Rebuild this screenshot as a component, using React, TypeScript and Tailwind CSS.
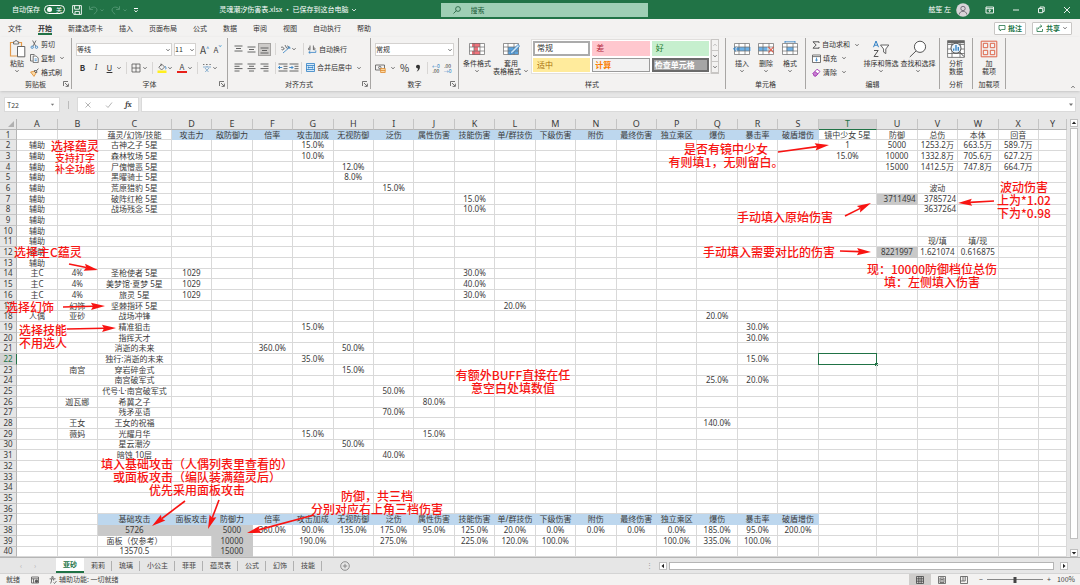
import React from 'react';
import clsx from 'clsx';

const COLS = 'ABCDEFGHIJKLMNOPQRSTUVWXY'.split('');
const ROWS = Array.from({ length: 40 }, (_, i) => i + 1);
const GRID = 'grid min-h-0 flex-1 grid-cols-[43fr_101fr_101fr_184fr_repeat(16,101fr)_146fr_repeat(4,101fr)_70fr]';

const STATS = {
    D: '攻击力', E: '敌防御力', F: '倍率', G: '攻击加成', H: '无视防御', I: '泛伤', J: '属性伤害', K: '技能伤害',
    L: '单/群技伤', M: '下级伤害', N: '附伤', O: '最终伤害', P: '独立乘区', Q: '爆伤', R: '暴击率', S: '破盾增伤',
};

const CELLS: Record<number, Record<string, string>> = {
    1: { ...STATS, C: '蕴灵/幻饰/技能', T: '镜中少女 5星', U: '防御', V: '总伤', W: '本体', X: '回音' },
    2: { A: '辅助', C: '古神之子 5星', G: '15.0%', T: '1', U: '5000', V: '1253.2万', W: '663.5万', X: '589.7万' },
    3: { A: '辅助', C: '森林牧场 5星', G: '10.0%', T: '15.0%', U: '10000', V: '1332.8万', W: '705.6万', X: '627.2万' },
    4: { A: '辅助', C: '尸傀憎恶 5星', H: '12.0%', U: '15000', V: '1412.5万', W: '747.8万', X: '664.7万' },
    5: { A: '辅助', C: '黑曜骑士 5星', H: '8.0%' },
    6: { A: '辅助', C: '荒原猎豹 5星', I: '15.0%', V: '波动' },
    7: { A: '辅助', C: '破阵红枪 5星', K: '15.0%', U: '3711494', V: '3785724' },
    8: { A: '辅助', C: '战场残念 5星', K: '10.0%', V: '3637264' },
    9: { A: '辅助' },
    10: { A: '辅助' },
    11: { A: '辅助', V: '现/填', W: '填/现' },
    12: { A: '辅助', U: '8221997', V: '1.621074', W: '0.616875' },
    13: { A: '辅助' },
    14: { A: '主C', B: '4%', C: '圣枪使者 5星', D: '1029', K: '30.0%' },
    15: { A: '主C', B: '4%', C: '美梦馆·夏梦 5星', D: '1029', K: '40.0%' },
    16: { A: '主C', B: '4%', C: '旅灵 5星', D: '1029', K: '30.0%' },
    17: { B: '幻饰', C: '坚棘指环 5星', L: '20.0%' },
    18: { A: '人偶', B: '亚砂', C: '战场冲锋', Q: '20.0%' },
    19: { C: '精准狙击', G: '15.0%', R: '30.0%' },
    20: { C: '指挥天才', R: '30.0%' },
    21: { C: '消逝的未来', F: '360.0%', H: '50.0%' },
    22: { C: '独行:消逝的未来', G: '35.0%', R: '15.0%' },
    23: { B: '南宫', C: '穿岩碎金式', H: '15.0%' },
    24: { C: '南宫破军式', Q: '25.0%', R: '20.0%' },
    25: { C: '代号·L·南宫破军式', I: '50.0%' },
    26: { B: '迦瓦娜', C: '希冀之子', J: '80.0%' },
    27: { C: '残矛巫语', I: '70.0%' },
    28: { B: '王女', C: '王女的祝福', Q: '140.0%' },
    29: { B: '薇妈', C: '光耀月华', G: '15.0%', J: '15.0%' },
    30: { C: '星云潮汐', H: '50.0%' },
    31: { C: '暗蚀 10层', I: '40.0%' },
    37: { ...STATS, C: '基础攻击', D: '面板攻击', E: '防御力' },
    38: {
        C: '5726', E: '5000', F: '360.0%', G: '90.0%', H: '135.0%', I: '175.0%', J: '95.0%', K: '125.0%', L: '20.0%',
        M: '0.0%', N: '0.0%', O: '0.0%', P: '0.0%', Q: '185.0%', R: '95.0%', S: '200.0%',
    },
    39: {
        C: '面板（仅参考）', E: '10000', G: '190.0%', I: '275.0%', K: '225.0%', L: '120.0%', M: '100.0%',
        P: '100.0%', Q: '335.0%', R: '100.0%',
    },
    40: { C: '13570.5', E: '15000' },
};

const GRAY_CELLS = ['U7', 'U12', 'C38', 'D38', 'E38', 'E39', 'E40'];
const RIGHT_CELLS = ['U7', 'V7', 'V8'];

const isBlue = (col: string, row: number) =>
    (row === 1 && col >= 'D' && col <= 'S') || (row === 37 && col >= 'C' && col <= 'S');

const Chevron = ({ className }: { className?: string }) => (
    <svg viewBox="0 0 6 4" className={clsx('h-1 w-1.5 shrink-0', className)} fill="none" stroke="#444" strokeWidth="0.8">
        <path d="M1.4 1.2 3 2.8l1.6-1.6" />
    </svg>
);

const Launcher = () => (
    <button aria-label="更多" className="absolute right-0.5 bottom-0.5">
        <svg viewBox="0 0 6 6" className="size-1.5" fill="none" stroke="#555" strokeWidth="0.8">
            <path d="M.5 5V.5H5M2 2l3 3M5.4 2.6v2.8H2.6" />
        </svg>
    </button>
);

const Divider = () => <span className="mx-1 h-3 w-px bg-[#d8d6d4]" />;

const Group: React.FC<{ label: string; width: string; launcher?: boolean; children: React.ReactNode }> = ({
    label, width, launcher, children,
}) => (
    <section className={clsx('relative flex shrink-0 flex-col border-r border-[#a8a6a4]', width)}>
        <div className="flex flex-1 items-stretch">{children}</div>
        <h2 className="flex h-[10px] items-center justify-center">{label}</h2>
        {launcher && <Launcher />}
    </section>
);

const Big: React.FC<{ icon: React.ReactNode; lines: string[]; width: string; drop?: boolean }> = ({
    icon, lines, width, drop,
}) => (
    <button className={clsx('flex shrink-0 flex-col items-center leading-[8px]', width)}>
        <span className="mb-px flex h-[19px] items-center">{icon}</span>
        {lines.map((l, i) => (
            <span key={l} className="flex items-center whitespace-nowrap">
                {l}
                {drop && i === 1 && <Chevron className="ml-0.5" />}
            </span>
        ))}
        {drop && lines.length === 1 && <Chevron className="mt-0.5" />}
    </button>
);

const Small: React.FC<{ icon: React.ReactNode; text: string; drop?: boolean; className?: string }> = ({
    icon, text, drop, className,
}) => (
    <button className={clsx('flex items-center gap-0.5 whitespace-nowrap', className)}>
        {icon}
        {text}
        {drop && <Chevron className="ml-0.5" />}
    </button>
);

/* ---- ribbon icons ---- */

const PasteIcon = () => (
    <svg viewBox="0 0 17 19" className="h-[19px] w-[17px]" fill="none">
        <path d="M10 17H1.5V3.5h11V7" stroke="#e39a4a" strokeWidth="1.2" />
        <path d="M4.5 5V2.8h1.3a1.3 1.3 0 0 1 2.6 0h1.3V5z" fill="#f3f2f1" stroke="#555" strokeWidth="0.8" />
        <path d="M8.5 7.5h7.3v10.3H8.5z" fill="#fff" stroke="#555" strokeWidth="0.9" />
    </svg>
);

const CutIcon = () => (
    <svg viewBox="0 0 9 9" className="size-[9px]" fill="none">
        <path d="M2.6.5 5.8 6.3M6 .5 2.9 6.3" stroke="#555" strokeWidth="0.8" />
        <circle cx="2.2" cy="7.2" r="1.2" stroke="#2f7fc4" strokeWidth="0.8" />
        <circle cx="6.5" cy="7.2" r="1.2" stroke="#2f7fc4" strokeWidth="0.8" />
    </svg>
);

const CopyIcon = () => (
    <svg viewBox="0 0 9 9" className="size-[9px]" fill="none" strokeWidth="0.8">
        <path d="M2.8 7H.5V.5h4" stroke="#555" />
        <path d="M3.2 2h3l2 2v4.6h-5z" fill="#fff" stroke="#555" />
        <path d="M4.6 5h2.2M4.6 6.7h2.2" stroke="#2f7fc4" />
    </svg>
);

const BrushIcon = () => (
    <svg viewBox="0 0 9 9" className="size-[9px]" fill="none">
        <path d="M.6 4 4.4 3.2 6 5 4 8.4z" fill="#fbd9a5" stroke="#e08a2c" strokeWidth="0.8" />
        <path d="m4.2 3 1-1 2 2-1 1zM6.2 3 8.4.6" stroke="#555" strokeWidth="0.9" />
    </svg>
);

const Lines = ({ d, on }: { d: string; on?: boolean }) => (
    <button className={clsx('flex size-[13px] items-center justify-center', on && 'border border-[#a5a3a1] bg-[#cdcbc9]')}>
        <svg viewBox="0 0 9 9" className="size-[9px] shrink-0" fill="none" stroke="#555" strokeWidth="0.9">
            <path d={d} />
        </svg>
    </button>
);

const IndentIcon = ({ flip }: { flip?: boolean }) => (
    <svg viewBox="0 0 10 9" className="h-[9px] w-[10px]" fill="none" strokeWidth="0.9">
        <path d="M.5 1h9M5.5 3.3h4M5.5 5.7h4M.5 8h9" stroke="#555" />
        <path d={flip ? 'M.3 4.5h3.6M2.5 3l1.5 1.5L2.5 6' : 'M4.2 4.5H.6M2 3 .5 4.5 2 6'} stroke="#2f7fc4" />
    </svg>
);

const GridIcon = ({ kind }: { kind: 'cond' | 'table' | 'insert' | 'delete' | 'format' }) => (
    <svg viewBox="0 0 18 16" className="h-4 w-[18px]" fill="none">
        <path d="M1.5 2.5h15v11h-15z" fill="#fff" />
        {kind === 'cond' && <path d="M4 2h8v4H4zM4 10h8v4H4zM6 6h4v4H6z" fill="#f2727c" />}
        {kind === 'table' && <path d="M6 6h10.5v7.5H6z" fill="#5ba3dd" />}
        {kind === 'insert' && <path d="M4 6h13.5v4H4z" fill="#6db1e6" />}
        {kind === 'delete' && <path d="M1.5 6h9v4h-9z" fill="#6db1e6" />}
        {kind === 'format' && <path d="M5.5 6h7v4h-7z" fill="#6db1e6" />}
        <path d="M1.5 2.5h15v11h-15zM1.5 6h15M1.5 10h15M6 2.5v11M12 2.5v11" stroke="#6a6a6a" strokeWidth="0.7" />
        {kind === 'table' && <path d="m8 13.5 1-3 7-7 1.6 1.6-7 7z" fill="#cfe5f6" stroke="#2f7fc4" strokeWidth="0.8" />}
        {kind === 'insert' && <path d="M6 8H.8M3 5.6.6 8 3 10.4" stroke="#2f7fc4" strokeWidth="1" />}
        {kind === 'delete' && <path d="m11.5 6 5 5.5m0-5.5-5 5.5" stroke="#e0523f" strokeWidth="1.1" />}
        {kind === 'format' && <path d="M4 .8h10M4 0v2M14 0v2" stroke="#2f7fc4" strokeWidth="0.8" />}
    </svg>
);

const SortIcon = () => (
    <svg viewBox="0 0 18 18" className="size-[18px]" fill="none">
        <path d="M1.5 7.2 4 1l2.5 6.2M2.3 5.2h3.4" stroke="#2f7fc4" strokeWidth="1" />
        <path d="M2 10.5h4.2L2 16.5h4.4" stroke="#555" strokeWidth="1" />
        <path d="M8.5 5h8.3l-3 4v4.6l-2.2-1.5V9z" fill="#fff" stroke="#555" strokeWidth="0.9" />
    </svg>
);

const FindIcon = () => (
    <svg viewBox="0 0 18 18" className="size-[18px]" fill="none" stroke="#555" strokeWidth="1">
        <circle cx="11" cy="6.8" r="5.6" fill="#fff" />
        <path d="m7 11-6.2 6" />
    </svg>
);

const AnalyzeIcon = () => (
    <svg viewBox="0 0 18 18" className="size-[18px]" fill="none">
        <path d="M.6.6h16.8v16.8H.6zM.6 4.5h16.8M.6 9h16.8M.6 13.5h16.8M5 .6v16.8M13 .6v16.8" fill="#fff" stroke="#666" strokeWidth="0.8" />
        <path d="M.6.6h16.8v2.6H.6z" fill="#666" />
        <circle cx="9" cy="8.2" r="5" fill="#e9f3fb" stroke="#444" strokeWidth="0.9" />
        <path d="M6.7 10.8V8.4M9 10.8V5M11.3 10.8V7" stroke="#2f7fc4" strokeWidth="1.3" />
        <path d="m12.6 12 4.4 4.6" stroke="#444" strokeWidth="1" />
    </svg>
);

const AddinIcon = () => (
    <svg viewBox="0 0 18 18" className="size-[18px]" fill="none" stroke="#dd6348" strokeWidth="1">
        <path d="M1.2 1.2h15.6v15.6H1.2z" />
        <path d="M3.3 3.3h4.4v4.4H3.3zM10.3 3.3h4.4v4.4h-4.4zM3.3 10.3h4.4v4.4H3.3zM10.3 10.3h4.4v4.4h-4.4z" />
    </svg>
);

const TitleBar = () => (
    <header className="flex h-[19px] shrink-0 items-center bg-[#217346] text-white">
        <div className="flex flex-1 items-center pl-3">
            <label className="flex items-center gap-1">
                自动保存
                <input type="checkbox" className="peer sr-only" />
                <span className="flex h-[9px] w-[21px] items-center justify-between rounded-full border border-white px-0.5 text-[6px]">
                    <span className="size-[5px] rounded-full bg-white" />关
                </span>
            </label>
            <svg viewBox="0 0 10 10" className="ml-[7px] size-[10px]" fill="none" stroke="#fff" strokeWidth="0.9">
                <path d="M.6.6h8.8v8.8H2L.6 8zM2.6.8v3.4h4.8V.8M3 9.2V6.4h4.4v2.8" />
            </svg>
            <svg viewBox="0 0 52 10" className="ml-1.5 h-[10px] w-[52px]" fill="none" stroke="#4f9570" strokeWidth="1">
                <path d="M1.5 1.2v3.3h3.4M1.8 4.2C4 1 9 1.6 9 5c0 1.8-1.6 3-3.2 4.2M31.5 1.2v3.3h-3.4M31.2 4.2C29 1 24 1.6 24 5c0 1.8 1.6 3 3.2 4.2" />
                <path d="m12.5 4.5 1.5 1.4 1.5-1.4M35.5 4.5 37 5.9l1.5-1.4" />
                <path d="M46 3.5h4M46.4 5.3 48 6.9l1.6-1.6" stroke="#fff" />
            </svg>
            <h1 className="mr-20 ml-auto flex items-center whitespace-nowrap">
                灵魂潮汐伤害表.xlsx • 已保存到这台电脑
                <svg viewBox="0 0 6 4" className="ml-0.5 h-1 w-1.5" fill="none" stroke="#fff" strokeWidth="0.8"><path d="m1 1 2 2 2-2" /></svg>
            </h1>
        </div>
        <label className="ml-1 flex h-[14px] w-[207px] items-center gap-2.5 bg-[#9fcfb5] pl-3 text-[#1c5b38]">
            <svg viewBox="0 0 8 8" className="size-2" fill="none" stroke="#1c5b38" strokeWidth="0.8">
                <circle cx="5" cy="3" r="2.4" /><path d="M3.3 4.7.5 7.5" />
            </svg>
            <input placeholder="搜索" aria-label="搜索" className="w-24 bg-transparent outline-none placeholder:text-[#1c5b38]" />
        </label>
        <div className="flex flex-1 items-center justify-end pr-2">
            <span>舷笙 左</span>
            <svg viewBox="0 0 14 14" className="ml-[5px] size-[14px]" fill="none">
                <circle cx="7" cy="7" r="6.8" fill="#d9d4d8" />
                <circle cx="7" cy="5.5" r="2.2" stroke="#6b6570" strokeWidth="0.9" />
                <path d="M3.2 11.5c.4-4.3 7.2-4.3 7.6 0" stroke="#6b6570" strokeWidth="0.9" />
            </svg>
            <svg viewBox="0 0 88 10" className="ml-[14px] h-[10px] w-[88px]" fill="none" stroke="#fff" strokeWidth="0.9">
                <path d="M2 2h7.5v6H2zM2 3.7h7.5M5.7 7V5M4.7 5.7l1-1 1 1" />
                <path d="M29 5h6" />
                <path d="M54.5 3.5h4.2v4.2h-4.2zM56 3.3V2h4.2v4.4H59" />
                <path d="m80 2 6 6m0-6-6 6" />
            </svg>
        </div>
    </header>
);

const MENU = ['文件', '开始', '新建选项卡', '插入', '页面布局', '公式', '数据', '审阅', '视图', '自动执行', '帮助'];

const MenuBar = () => (
    <nav className="flex h-[18px] shrink-0 items-center gap-4 bg-[#f3f2f1] px-2">
        {MENU.map((m) => (
            <button key={m} className={clsx('flex h-[14px] items-center border-y-2 border-transparent whitespace-nowrap', m === '开始' && 'border-b-[#217346] font-bold')}>
                {m}
            </button>
        ))}
        <div className="ml-auto flex gap-1.5 font-bold text-[#217346]">
            <button className="flex h-[13px] w-8 items-center justify-center gap-0.5 rounded-[1px] border border-[#c8c6c4] bg-white">
                <svg viewBox="0 0 8 8" className="size-2" fill="none" stroke="#217346" strokeWidth="0.8"><path d="M1 1.5h6v4H3.5L2.2 7V5.5H1z" /></svg>
                批注
            </button>
            <button className="flex h-[13px] w-10 items-center justify-center gap-0.5 rounded-[1px] border border-[#c8c6c4] bg-white">
                <svg viewBox="0 0 8 8" className="size-2" fill="none" stroke="#217346" strokeWidth="0.8"><path d="M1 3.5v4h5.5V5M2.5 5C2.6 3 4 2.2 5.5 2.2M4.3.8l1.6 1.4-1.6 1.4" /></svg>
                共享
                <Chevron />
            </button>
        </div>
    </nav>
);

const Ribbon = () => (
    <div className="flex h-[54px] shrink-0 bg-[#f3f2f1] pt-px pb-0.5 shadow-sm">
        <Group label="剪贴板" width="w-[72px]" launcher>
            <div className="flex pt-px pl-2">
                <Big icon={<PasteIcon />} lines={['粘贴']} width="w-[18px]" drop />
            </div>
            <div className="flex flex-col justify-around pl-1">
                <Small icon={<CutIcon />} text="剪切" />
                <Small icon={<CopyIcon />} text="复制" drop />
                <Small icon={<BrushIcon />} text="格式刷" />
            </div>
        </Group>

        <Group label="字体" width="w-[156px]" launcher>
            <div className="flex flex-1 flex-col justify-around py-0.5 pl-1">
                <div className="flex items-center gap-0.5">
                    <label className="flex items-center border border-[#d4d2d0] bg-white">
                        <select aria-label="字体" className="h-[11px] w-[88px] appearance-none bg-white"><option>等线</option></select>
                        <Chevron />
                    </label>
                    <label className="flex items-center border border-[#d4d2d0] bg-white">
                        <select aria-label="字号" className="h-[11px] w-[14px] appearance-none bg-white"><option>11</option></select>
                        <Chevron />
                    </label>
                    <button className="ml-0.5 text-[10px] text-[#444]">A<sup className="text-[6px] text-[#2f7fc4]">^</sup></button>
                    <button className="ml-0.5 text-[8px] text-[#444]">A<sup className="text-[6px] text-[#2f7fc4]">ˇ</sup></button>
                </div>
                <div className="flex items-center text-[#333]">
                    <button className="w-[13px] text-[8px] font-bold">B</button>
                    <button className="w-[14px] font-serif text-[8px] italic">I</button>
                    <button className="w-[13px] text-[8px] underline">U</button>
                    <Chevron />
                    <Divider />
                    <svg viewBox="0 0 10 10" className="size-[10px]" fill="none" stroke="#555" strokeWidth="0.8"><path d="M1 1h8v8H1zM5 1v8M1 5h8" /></svg>
                    <Chevron className="ml-px" />
                    <Divider />
                    <svg viewBox="0 0 10 10" className="size-[10px]" fill="none">
                        <path d="m1.8 4.2 3-3 2.8 2.8-3 3zM4 .6v2.6" stroke="#555" strokeWidth="0.8" />
                        <path d="M8.2 3.2c1 1.6 1 2.8.2 3" stroke="#2f7fc4" strokeWidth="0.9" />
                        <path d="M.5 7.5h9V10h-9z" fill="#ffef1f" />
                    </svg>
                    <Chevron />
                    <button className="ml-1 flex w-[10px] items-center justify-center border-b-2 border-[#e8201a] text-[8px] leading-[8px] text-[#444]">A</button>
                    <Chevron />
                    <Divider />
                    <svg viewBox="0 0 10 10" className="size-[10px]" fill="none" strokeWidth="0.8">
                        <path d="M1 1.5h1.4M4 1.5h1.6M7.4 1.5h1.4" stroke="#555" /><path d="M1 4h8M5 3v1M3 5l3.5 4M7 5 3.2 9" stroke="#6f9fc8" />
                    </svg>
                    <Chevron />
                </div>
            </div>
        </Group>

        <Group label="对齐方式" width="w-[143px]" launcher>
            <div className="flex flex-1 flex-col justify-around py-0.5 pl-1">
                <div className="flex items-center">
                    <Lines d="M.5 1h8M2 3.5h5M.5 6h8" />
                    <Lines d="M.5 2h8M2 4.5h5M.5 7h8" />
                    <Lines d="M.5 3h8M2 5.5h5M.5 8h8" on />
                    <Divider />
                    <svg viewBox="0 0 11 10" className="h-[10px] w-[11px]" fill="none" strokeWidth="0.8">
                        <path d="M1 3.5c1.5-1.4 2.4 0 3.4 1.6M1.6 5.2a1 1 0 1 0 2-.6M5 1l1.6 3a1.2 1.2 0 1 0 .6-2" stroke="#555" /><path d="m3 9 6.5-5.6M7.6 3h2.2v2" stroke="#2f7fc4" />
                    </svg>
                    <Chevron />
                    <span className="w-0.5" />
                    <Divider />
                    <Small
                        text="自动换行"
                        icon={
                            <svg viewBox="0 0 9 9" className="size-[9px]" fill="none" strokeWidth="0.8">
                                <path d="M2 .5v4.4M2 3.2a1 1 0 1 0 0 1.4M5.4.5v4.4M5.4 3.2a1 1 0 1 1 0 1.4" stroke="#555" /><path d="M.8 7.4h7V5.4M2.4 6 .8 7.4l1.6 1.4" stroke="#2f7fc4" />
                            </svg>
                        }
                    />
                </div>
                <div className="flex items-center">
                    <Lines d="M.5 1h8M.5 3.3h5M.5 5.6h8M.5 8h5" />
                    <Lines d="M.5 1h8M2 3.3h5M.5 5.6h8M2 8h5" />
                    <Lines d="M.5 1h8M3.5 3.3h5M.5 5.6h8M3.5 8h5" />
                    <span className="mr-0.5 ml-1 h-3 w-px bg-[#d8d6d4]" />
                    <IndentIcon />
                    <span className="w-px" />
                    <IndentIcon flip />
                    <span className="mr-1 ml-0.5 h-3 w-px bg-[#d8d6d4]" />
                    <Small
                        text="合并后居中"
                        drop
                        icon={
                            <svg viewBox="0 0 9 9" className="size-[9px]" fill="none" strokeWidth="0.8">
                                <path d="M.5.5h8v8h-8z" fill="#d6e9f8" stroke="#2f7fc4" /><path d="M.5 2.5h8M.5 6.5h8M1.8 4.5h5.4M3 3.6l-1 .9 1 .9M6 3.6l1 .9-1 .9" stroke="#2f7fc4" />
                            </svg>
                        }
                    />
                </div>
            </div>
        </Group>

        <Group label="数字" width="w-[88px]" launcher>
            <div className="flex flex-1 flex-col justify-around py-0.5 pl-1">
                <label className="mr-1 flex items-center border border-[#d4d2d0] bg-white">
                    <select aria-label="数字格式" className="h-[11px] flex-1 appearance-none bg-white"><option>常规</option></select>
                    <Chevron />
                </label>
                <div className="flex items-center gap-1 text-[#333]">
                    <svg viewBox="0 0 11 9" className="h-[9px] w-[11px]" fill="none" strokeWidth="0.8">
                        <path d="M.5 1h9v5h-9z" stroke="#555" /><circle cx="4.8" cy="3.5" r="1.2" stroke="#555" />
                        <path d="M5.6 4.5h4.6v4H5.6zM5.6 6.5h4.6" fill="#fbd9a5" stroke="#e08a2c" />
                    </svg>
                    <Chevron />
                    <button className="w-[9px] text-[10px] leading-[10px]">%</button>
                    <svg viewBox="0 0 6 8" className="mx-0.5 h-2 w-1.5"><path d="M1 2.6a2 2 0 1 1 4 .2C5 5.2 3.6 7 1.600 7.600 2.600 6.500 3 5.600 3 4.600 1.800 4.600 1 3.700 1 2.600z" fill="#333" /></svg>
                    <span className="h-3 w-px bg-[#d8d6d4]" />
                    <button className="flex flex-col text-[5px] leading-[5px]"><span className="text-[#2f7fc4]">←0</span><span>.00</span></button>
                    <button className="flex flex-col text-[5px] leading-[5px]"><span>.00</span><span className="text-[#2f7fc4]">→0</span></button>
                </div>
            </div>
        </Group>

        <Group label="样式" width="w-[267px]">
            <div className="flex pt-px pl-0.5">
                <Big icon={<GridIcon kind="cond" />} lines={['条件格式']} width="w-8" drop />
                <Big icon={<GridIcon kind="table" />} lines={['套用', '表格格式']} width="w-[36px]" drop />
            </div>
            <div className="mt-px ml-0.5 grid h-[35px] w-[180px] grid-cols-3 grid-rows-2 gap-0.5 border border-[#e1dfdd] bg-white p-px text-[8px]">
                <button className="border-2 border-[#ababab] bg-white px-0.5 text-left">常规</button>
                <button className="bg-[#ffc7ce] px-1 text-left text-[#b0243a]">差</button>
                <button className="bg-[#c6efce] px-1 text-left text-[#1f7a2e]">好</button>
                <button className="bg-[#ffeb9c] px-1 text-left text-[#a8700a]">适中</button>
                <button className="border border-[#9a9a9a] bg-[#f2f2f2] px-0.5 text-left font-bold text-[#fa7d00]">计算</button>
                <button className="border-2 border-[#6b6b6b] bg-[#a5a5a5] px-px text-left font-bold text-white">检查单元格</button>
            </div>
            <div className="mt-px flex h-[35px] w-2 flex-col border border-[#c8c6c4]">
                {[0, 1, 2].map((i) => (
                    <button key={i} aria-label="滚动样式" className="flex flex-1 items-center justify-center border-b border-[#c8c6c4]">
                        <Chevron className={clsx(i === 0 && 'rotate-180 opacity-40')} />
                    </button>
                ))}
            </div>
        </Group>

        <Group label="单元格" width="w-[80px]">
            <div className="flex pt-px pl-1">
                <Big icon={<GridIcon kind="insert" />} lines={['插入']} width="w-6" drop />
                <Big icon={<GridIcon kind="delete" />} lines={['删除']} width="w-6" drop />
                <Big icon={<GridIcon kind="format" />} lines={['格式']} width="w-6" drop />
            </div>
        </Group>

        <Group label="编辑" width="w-[134px]">
            <div className="flex w-[56px] flex-col items-start justify-around pl-1.5">
                <Small drop text="自动求和" icon={<svg viewBox="0 0 8 8" className="size-2" fill="none" stroke="#444" strokeWidth="0.9"><path d="M7 2V.8H1L4.2 4 1 7.200h6V6" /></svg>} />
                <Small drop text="填充" icon={<svg viewBox="0 0 9 9" className="size-[9px]" fill="none" strokeWidth="0.8"><path d="M.5 1h8v7.500h-8zM.5 2.600h8" fill="#fff" stroke="#555" /><path d="M4.500 3.600V7M3.200 5.800 4.500 7l1.300-1.200" stroke="#2f7fc4" /></svg>} />
                <Small drop text="清除" icon={<svg viewBox="0 0 9 9" className="size-[9px]" strokeWidth="0.9"><path d="M1 5.600 5 1.200l3 2.200-4 4.600H2.400z" fill="#fff" stroke="#a63fb5" /><path d="M1 5.600 2.800 3.600 6 5.800 4 8H2.400z" fill="#c77fd1" stroke="#a63fb5" /></svg>} />
            </div>
            <div className="flex pt-px">
                <Big icon={<SortIcon />} lines={['排序和筛选']} width="w-[38px]" drop />
                <Big icon={<FindIcon />} lines={['查找和选择']} width="w-[36px]" drop />
            </div>
        </Group>

        <Group label="分析" width="w-[33px]">
            <div className="flex flex-1 justify-center pt-px">
                <Big icon={<AnalyzeIcon />} lines={['分析', '数据']} width="w-6" />
            </div>
        </Group>
        <Group label="加载项" width="w-[33px]">
            <div className="flex flex-1 justify-center pt-px">
                <Big icon={<AddinIcon />} lines={['加', '载项']} width="w-6" />
            </div>
        </Group>
        <button aria-label="折叠功能区" className="mt-auto mr-1 ml-auto">
            <Chevron className="rotate-180" />
        </button>
    </div>
);

const FormulaBar = () => (
    <div className="flex h-7 shrink-0 items-center px-1 pb-px text-[#444]">
        <label className="flex h-[15px] w-14 items-center border border-[#dadada] bg-white pl-0.5">
            <input aria-label="名称框" defaultValue="T22" className="w-full min-w-0 bg-transparent outline-none" />
            <svg viewBox="0 0 6 4" className="mr-1 h-1 w-1.5"><path d="M1 .5h4L3 3z" fill="#777" /></svg>
        </label>
        <span className="mx-2 h-2 w-px bg-[#bbb]" />
        <div className="flex h-[15px] w-[62px] items-center justify-around border border-[#dadada] bg-white">
            <svg viewBox="0 0 8 8" className="size-2" fill="none" stroke="#b5b5b5"><path d="m1.500 1.500 5 5m0-5-5 5" /></svg>
            <svg viewBox="0 0 8 8" className="size-2" fill="none" stroke="#b5b5b5"><path d="m1 4.500 2 2L7 1.500" /></svg>
            <button className="font-serif text-[8px] font-bold italic">fx</button>
        </div>
        <label className="ml-0.5 flex h-[15px] flex-1 items-center border border-[#dadada] bg-white">
            <input aria-label="编辑栏" className="min-w-0 flex-1 bg-transparent px-1 outline-none" />
            <svg viewBox="0 0 6 4" className="mr-px h-1 w-1.5"><path d="M1 .5h4L3 3z" fill="#777" /></svg>
        </label>
    </div>
);

const Sheet = () => (
    <table className="flex h-full flex-1 flex-col font-['Noto_Sans','Noto_Sans_CJK_SC',sans-serif] text-[8px] text-[#3b3b3b]">
        <thead className="flex min-h-0 flex-1 text-[9px]">
            <tr className={GRID}>
                <th className="flex min-h-0 items-end justify-end border-r border-b border-[#b5b5b5] bg-[#e6e6e6] p-0.5">
                    <svg viewBox="0 0 6 6" className="size-1.5"><path d="M6 0v6H0z" fill="#b0b0b0" /></svg>
                </th>
                {COLS.map((c) => (
                    <th
                        key={c}
                        className={clsx(
                            'flex min-h-0 min-w-0 items-center justify-center border-r border-b border-r-[#c4c4c4] font-normal',
                            c === 'T' ? 'border-b-[#217346] bg-[#d2d2d2] text-[#217346]' : 'border-b-[#b5b5b5] bg-[#e6e6e6]'
                        )}
                    >
                        {c}
                    </th>
                ))}
            </tr>
        </thead>
        <tbody className="flex min-h-0 flex-[40] flex-col">
            {ROWS.map((r) => (
                <tr key={r} className={GRID}>
                    <th
                        className={clsx(
                            'flex min-h-0 min-w-0 items-center justify-center border-r border-b border-b-[#c4c4c4] font-normal',
                            r === 22 ? 'border-r-[#217346] bg-[#d2d2d2] text-[#217346]' : 'border-r-[#b5b5b5] bg-[#e6e6e6]'
                        )}
                    >
                        {r}
                    </th>
                    {COLS.map((c) => {
                        const id = c + r;
                        return (
                            <td
                                key={c}
                                className={clsx(
                                    'relative flex min-h-0 min-w-0 items-center border-r border-b whitespace-nowrap',
                                    RIGHT_CELLS.includes(id) ? 'justify-end pr-px' : 'justify-center',
                                    isBlue(c, r) && 'border-[#bdd7ee] bg-[#bdd7ee]',
                                    GRAY_CELLS.includes(id) && 'border-[#c9c9c9] bg-[#c9c9c9]',
                                    !isBlue(c, r) && !GRAY_CELLS.includes(id) && 'border-[#d9d9d9]'
                                )}
                            >
                                {CELLS[r]?.[c]}
                                {id === 'T22' && (
                                    <span className="absolute -inset-px border border-[#217346]">
                                        <span className="absolute -right-0.5 -bottom-0.5 size-[3px] bg-[#217346]" />
                                    </span>
                                )}
                            </td>
                        );
                    })}
                </tr>
            ))}
        </tbody>
    </table>
);

/* Red notes written over the sheet; x is the centre of the note, y its top. */
const NOTES = [
    { x: 75, y: 20, lines: ['选择蕴灵'] },
    { x: 75, y: 33, small: true, lines: ['支持打字', '补全功能'] },
    { x: 48, y: 126, lines: ['选择主C蕴灵'] },
    { x: 30, y: 181, lines: ['选择幻饰'] },
    { x: 43, y: 204, lines: ['选择技能', '不用选人'] },
    { x: 726, y: 23, lines: ['是否有镜中少女', '有则填1，无则留白。'] },
    { x: 785, y: 91, lines: ['手动填入原始伤害'] },
    { x: 1024, y: 61, lines: ['波动伤害', '上为*1.02', '下为*0.98'] },
    { x: 769, y: 126, lines: ['手动填入需要对比的伤害'] },
    { x: 932, y: 143, lines: ['现：10000防御档位总伤', '填：左侧填入伤害'] },
    { x: 513, y: 249, lines: ['有额外BUFF直接在任', '意空白处填数值'] },
    { x: 197, y: 338, lines: ['填入基础攻击（人偶列表里查看的）', '或面板攻击（编队装满蕴灵后）', '优先采用面板攻击'] },
    { x: 377, y: 370, lines: ['防御，共三档', '分别对应右上角三档伤害'] },
];

const ARROWS = [
    [69, 145, 98, 151],
    [63, 188, 105, 187],
    [67, 210, 116, 209],
    [778, 33, 829, 26],
    [845, 97, 871, 84],
    [994, 82, 958, 84],
    [840, 132, 871, 133],
    [185, 382, 152, 407],
    [219, 381, 208, 410],
    [314, 396, 247, 414],
];

const Notes = () => (
    <div className="pointer-events-none absolute inset-0 overflow-hidden text-[#f81412]">
        <svg className="absolute inset-0 size-full" stroke="#f81412" strokeWidth="1.6">
            {ARROWS.map(([x1, y1, x2, y2]) => {
                const len = Math.hypot(x2 - x1, y2 - y1);
                const ux = (x2 - x1) / len;
                const uy = (y2 - y1) / len;
                const bx = x2 - ux * 14;
                const by = y2 - uy * 14;
                return (
                    <g key={`${x1}-${y1}`}>
                        <line x1={x1} y1={y1} x2={bx + ux * 2} y2={by + uy * 2} />
                        <path
                            stroke="none"
                            fill="#f81412"
                            d={`M${x2} ${y2}L${bx - uy * 3.6} ${by + ux * 3.6}L${bx + ux * 2} ${by + uy * 2}L${bx + uy * 3.6} ${by - ux * 3.6}Z`}
                        />
                    </g>
                );
            })}
        </svg>
        {NOTES.map((n) => (
            <p
                key={n.lines[0]}
                style={{ left: n.x, top: n.y }}
                className={clsx(
                    'absolute -translate-x-1/2 text-center font-medium whitespace-nowrap',
                    n.small ? 'text-[10px] leading-[11px]' : 'text-[12px] leading-[13px]'
                )}
            >
                {n.lines.map((l) => (
                    <span key={l} className="block">{l}</span>
                ))}
            </p>
        ))}
    </div>
);

const ScrollArrow = ({ d, label }: { d: string; label: string }) => (
    <button aria-label={label} className="flex size-2 shrink-0 items-center justify-center border border-[#c0c0c0] bg-white">
        <svg viewBox="0 0 6 6" className="size-1.5 shrink-0"><path d={d} fill="#222" /></svg>
    </button>
);

const SHEETS = ['亚砂', '莉莉', '琉璃', '小公主', '菲菲', '蕴灵表', '公式', '幻饰', '技能'];

const SheetTabs = () => (
    <div className="flex h-4 shrink-0 items-center border-t border-[#b5b5b5] text-[#444]">
        <div className="flex w-14 justify-center gap-3 text-[#b0b0b0]">
            <span>‹</span>
            <span>›</span>
        </div>
        {SHEETS.map((s, i) => (
            <button
                key={s}
                className={clsx(
                    'flex shrink-0 items-center pl-[7px]',
                    i === 0
                        ? 'h-full border-b-2 border-[#217346] bg-white pr-[7px] font-bold text-[#217346]'
                        : 'h-[10px] border-r border-[#b0b0b0] pr-1.5'
                )}
            >
                {s}
            </button>
        ))}
        <svg viewBox="0 0 10 10" className="ml-[18px] size-[10px]" fill="none" stroke="#777" strokeWidth="0.8">
            <circle cx="5" cy="5" r="4.300" /><path d="M5 2.800v4.400M2.800 5h4.400" />
        </svg>
        <div className="mr-3 ml-auto flex w-[422px] items-center gap-0.5">
            <span className="mr-1 text-[#999]">⋮</span>
            <ScrollArrow label="向左滚动" d="M4 .8v4.400L1.500 3z" />
            <div className="mr-1 h-2 flex-1 border border-[#b5b5b5] bg-white" />
            <ScrollArrow label="向右滚动" d="M2 .8v4.400L4.500 3z" />
        </div>
    </div>
);

const StatusBar = () => (
    <footer className="flex h-3 shrink-0 items-center border-t border-[#d4d4d4] bg-[#f3f2f1] pr-[3px] pl-1.5 text-[#444]">
        <span>就绪</span>
        <svg viewBox="0 0 8 8" className="ml-[11px] size-2" fill="none" stroke="#555" strokeWidth="0.8"><path d="M.5 1h7v6h-7zM.5 2.800h7M2.500 2.800V7" /><circle cx="5.500" cy="5.200" r="1.300" fill="#555" /></svg>
        <svg viewBox="0 0 8 8" className="mr-0.5 ml-[10px] size-2" fill="none" stroke="#555" strokeWidth="0.8"><circle cx="3.500" cy="1.200" r=".8" /><path d="M.6 2.800h6M2.500 3v2L1.600 7.500M4.600 3v1.500M4.500 6.500l1 1L7.500 5" /></svg>
        <span>辅助功能: 一切就绪</span>
        <div className="ml-auto flex h-full items-center">
            <button aria-label="普通" className="flex h-full w-[22px] items-center justify-center bg-[#cfcdcb]">
                <svg viewBox="0 0 8 8" className="size-2" fill="none" stroke="#444" strokeWidth="0.8"><path d="M.5.5h7v7h-7zM.5 2.800h7M.5 5.200h7M2.800.5v7M5.200.5v7" /></svg>
            </button>
            <button aria-label="页面布局" className="flex w-[22px] justify-center">
                <svg viewBox="0 0 8 8" className="size-2" fill="none" stroke="#555" strokeWidth="0.8"><path d="M.5.5h7v7h-7zM2 2h4v4.500H2zM2.500 3.500h3M2.500 5h3" /></svg>
            </button>
            <button aria-label="分页预览" className="flex w-[22px] justify-center">
                <svg viewBox="0 0 8 8" className="size-2" fill="none" stroke="#555" strokeWidth="0.8"><path d="M.5.5h7v7h-7zM3 .5v4.500M5.200.5v4.500H.5" /></svg>
            </button>
            <button className="w-3">−</button>
            <div className="relative flex h-2 w-14 items-center">
                <span className="h-px w-full bg-[#888]" />
                <input type="range" aria-label="缩放" className="absolute inset-0 w-full opacity-0" />
                <span className="absolute left-1/2 h-1.5 w-[3px] -translate-x-1/2 bg-[#444]" />
            </div>
            <button className="w-3">+</button>
            <span className="w-[22px] text-center">100%</span>
        </div>
    </footer>
);

export default function App() {
    return (
        <div className="flex h-screen flex-col overflow-hidden bg-[#e6e6e6] font-['Noto_Sans_CJK_SC',sans-serif] text-[7px] leading-none text-[#333]">
            <TitleBar />
            <MenuBar />
            <Ribbon />
            <FormulaBar />
            <main className="relative flex min-h-0 flex-1">
                <div className="flex min-w-0 flex-1 bg-white">
                    <Sheet />
                </div>
                <div className="flex w-[13px] shrink-0 flex-col items-center gap-px">
                    <ScrollArrow label="向上滚动" d="M.8 4h4.400L3 1.500z" />
                    <div className="w-2 flex-1 border border-[#c0c0c0] bg-white" />
                    <div className="h-2" />
                    <ScrollArrow label="向下滚动" d="M.8 2h4.400L3 4.500z" />
                </div>
                <Notes />
            </main>
            <SheetTabs />
            <StatusBar />
        </div>
    );
}
